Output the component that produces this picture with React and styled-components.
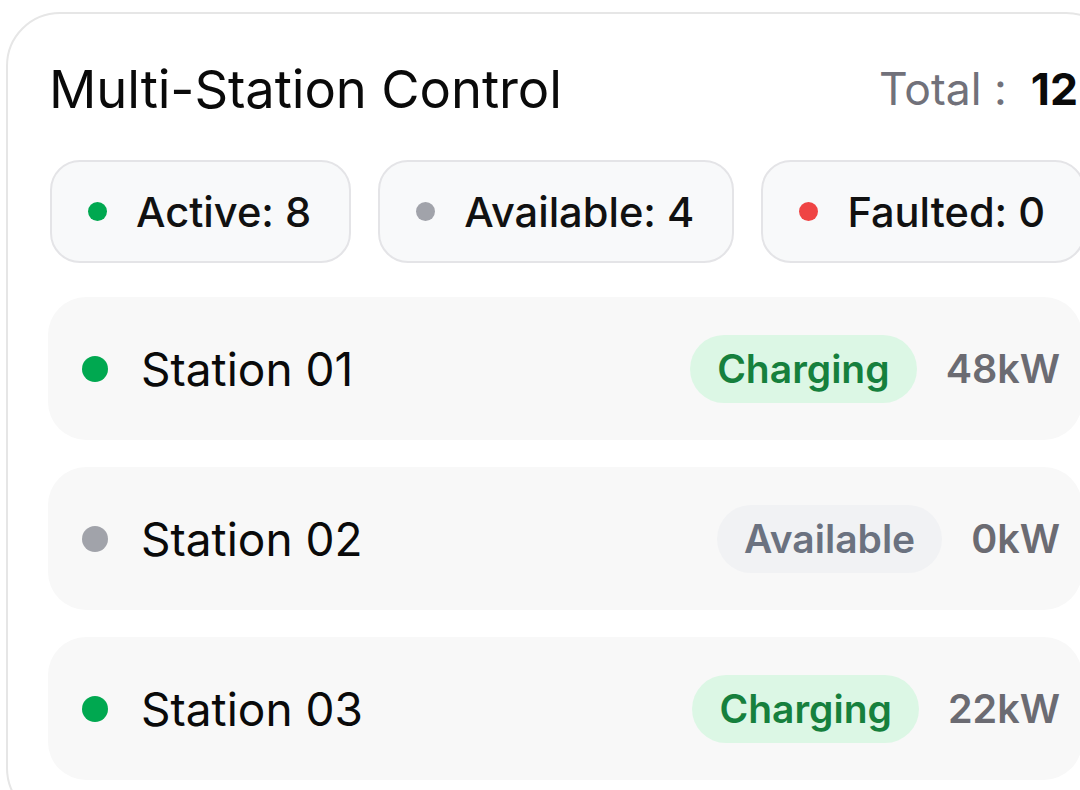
import styled, { createGlobalStyle } from 'styled-components';

const GlobalStyle = createGlobalStyle`
  html, body {
    margin: 0;
    padding: 0;
    background: #ffffff;
    overflow: hidden;
  }

  body {
    font-family: Inter, "Noto Sans", sans-serif;
    color: #0a0a0a;
  }
`;

const Card = styled.section`
  margin: 12px 0 0 6px;
  width: 1114px;
  box-sizing: border-box;
  border: 2px solid #e6e6e6;
  border-radius: 54px;
  padding: 44px 36px 40px 40px;
  background: #ffffff;
  display: flex;
  flex-direction: column;
`;

const Header = styled.header`
  display: flex;
  align-items: center;
  justify-content: space-between;
  height: 62px;
  margin-left: 1px;
`;

const Title = styled.h2`
  margin: 0;
  font-size: 52.5px;
  font-weight: 400;
  letter-spacing: -0.1px;
  color: #0a0a0a;
`;

const Total = styled.div`
  display: flex;
  align-items: baseline;
  gap: 24px;
  font-size: 44.5px;
  color: #71717a;
  margin-right: 4px;

  strong {
    color: #0a0a0a;
    font-weight: 700;
  }
`;

const Summary = styled.ul`
  list-style: none;
  margin: 40px 0 0 2px;
  padding: 0;
  display: flex;
  gap: 27px;
`;

const Pill = styled.li`
  flex-shrink: 0;
  box-sizing: border-box;
  display: flex;
  align-items: center;
  gap: 29px;
  height: 103px;
  padding: 0 38px 0 36px;
  border: 2px solid #e4e4e7;
  border-radius: 30px;
  background: #f8f9fa;
  font-size: 41.6px;
  font-weight: 500;
  color: #111111;
`;

const Dot = styled.span`
  flex-shrink: 0;
  width: ${(p) => p.size}px;
  height: ${(p) => p.size}px;
  border-radius: 50%;
  background: ${(p) => p.color};
`;

const Rows = styled.div`
  margin-top: 34px;
  display: flex;
  flex-direction: column;
  gap: 27px;
`;

const Row = styled.div`
  display: flex;
  align-items: center;
  height: 143px;
  padding: 0 22px 0 34px;
  border-radius: 38px;
  background: #f8f8f8;
`;

const Name = styled.span`
  margin-left: 33px;
  font-size: 46px;
  font-weight: 400;
  color: #0a0a0a;
`;

const Badge = styled.span`
  margin-left: auto;
  display: flex;
  align-items: center;
  height: 68px;
  padding: 0 27px;
  border-radius: 34px;
  font-size: 39px;
  font-weight: 600;
  background: ${(p) => (p.tone === 'green' ? '#dcf7e5' : '#f1f2f4')};
  color: ${(p) => (p.tone === 'green' ? '#16803d' : '#6b7280')};
`;

const Power = styled.span`
  margin-left: 29px;
  font-size: 39.5px;
  font-weight: 600;
  color: #6b6b72;
`;

const colors = {
  active: '#00a850',
  idle: '#a1a3aa',
  fault: '#ef4444',
};

const counts = [
  { label: 'Active: 8', color: colors.active },
  { label: 'Available: 4', color: colors.idle },
  { label: 'Faulted: 0', color: colors.fault },
];

const stations = [
  { name: 'Station 01', status: 'Charging', power: '48kW' },
  { name: 'Station 02', status: 'Available', power: '0kW' },
  { name: 'Station 03', status: 'Charging', power: '22kW' },
];

const App = () => {
  return (
    <>
      <GlobalStyle />
      <Card>
        <Header>
          <Title>Multi-Station Control</Title>
          <Total>
            <span>Total :</span>
            <strong>12</strong>
          </Total>
        </Header>

        <Summary>
          {counts.map((c) => (
            <Pill key={c.label}>
              <Dot size={19} color={c.color} />
              {c.label}
            </Pill>
          ))}
        </Summary>

        <Rows>
          {stations.map((s) => {
            const charging = s.status === 'Charging';
            return (
              <Row key={s.name}>
                <Dot size={26} color={charging ? colors.active : colors.idle} />
                <Name>{s.name}</Name>
                <Badge tone={charging ? 'green' : 'gray'}>{s.status}</Badge>
                <Power>{s.power}</Power>
              </Row>
            );
          })}
        </Rows>
      </Card>
    </>
  );
};

export default App;
